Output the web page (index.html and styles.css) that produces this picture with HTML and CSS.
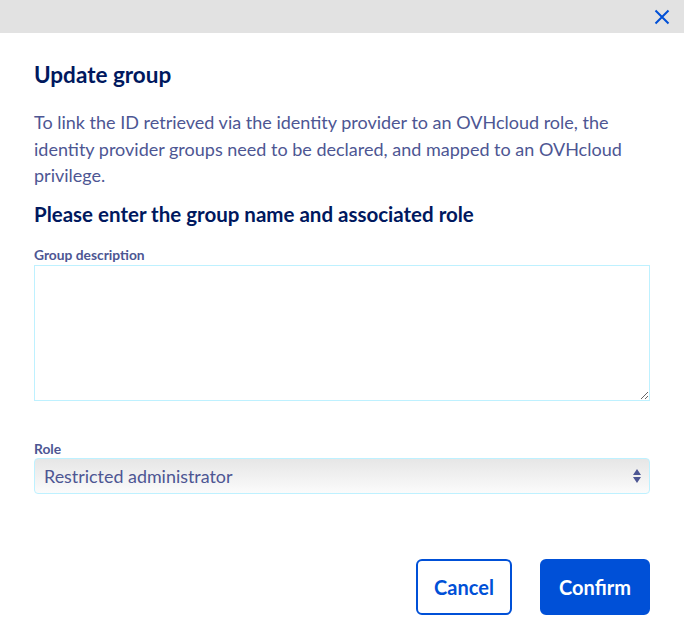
FILE: index.html
```html
<!DOCTYPE html>
<html lang="en">
<head>
<meta charset="utf-8">
<title>Update group</title>
<link rel="stylesheet" href="styles.css">
</head>
<body>
<div class="modal">
  <div class="topbar">
    <button class="close" aria-label="Close">
      <svg width="16" height="16" viewBox="0 0 16 16"><path d="M1.5 1.5 L14.5 14.5 M14.5 1.5 L1.5 14.5" stroke="#0050d7" stroke-width="2" fill="none"/></svg>
    </button>
  </div>
  <div class="content">
    <h2 class="title">Update group</h2>
    <p class="intro">To link the ID retrieved via the identity provider to an OVHcloud role, the identity provider groups need to be declared, and mapped to an OVHcloud privilege.</p>
    <h3 class="subtitle">Please enter the group name and associated role</h3>
    <label class="label">Group description</label>
    <textarea class="textarea"></textarea>
    <label class="label role-label">Role</label>
    <div class="select">
      <span>Restricted administrator</span>
      <svg class="arrows" width="8" height="16" viewBox="0 0 8 16"><path d="M4 1 L8 7 L0 7 Z M0 9 L8 9 L4 15 Z" fill="#4d5693"/></svg>
    </div>
    <div class="actions">
      <button class="btn btn-outline">Cancel</button>
      <button class="btn btn-primary">Confirm</button>
    </div>
  </div>
</div>
</body>
</html>
```
FILE: styles.css
```css
* { box-sizing: border-box; }
html, body { margin: 0; padding: 0; background: #fff; }
body { font-family: "Lato", "Open Sans", sans-serif; color: #4d5693; }
.modal { width: 684px; height: 639px; background: #fff; }
.topbar { height: 33px; background: #e2e2e2; display: flex; justify-content: flex-end; align-items: center; padding-right: 14px; }
.close { background: none; border: 0; padding: 0; width: 16px; height: 16px; display: flex; cursor: pointer; }
.content { padding: 28px 34px 0 34px; display: flex; flex-direction: column; }
.title { margin: 0; font-size: 22.5px; line-height: 28px; font-weight: 700; color: #00185e; }
.intro { margin: 20px 0 0 0; font-size: 18px; line-height: 26.5px; color: #4d5693; }
.subtitle { margin: 12px 0 0 0; font-size: 20.5px; line-height: 26px; font-weight: 700; color: #00185e; }
.label { margin-top: 19px; font-size: 13.8px; line-height: 18px; font-weight: 700; color: #4d5693; display: block; }
.textarea { margin-top: 1px; width: 100%; height: 136px; border: 1px solid #bef1ff; border-radius: 0; resize: vertical; font-family: inherit; outline: none; }
.role-label { margin-top: 39px; }
.select { margin-top: 0; height: 36px; border: 1px solid #bef1ff; border-radius: 4px; background: linear-gradient(#e6e6e6, #fbfbfb); display: flex; align-items: center; justify-content: space-between; padding: 0 8px 0 9px; font-size: 17.9px; color: #4d5693; }
.arrows { display: block; }
.actions { margin-top: 65px; display: flex; justify-content: flex-end; gap: 28px; }
.btn { height: 56px; border-radius: 6px; font-family: inherit; font-size: 20px; font-weight: 700; padding: 0; cursor: pointer; }
.btn-outline { width: 96px; background: #fff; border: 2px solid #0050d7; color: #0050d7; }
.btn-primary { width: 110px; background: #0050d7; border: 2px solid #0050d7; color: #fff; }
```
